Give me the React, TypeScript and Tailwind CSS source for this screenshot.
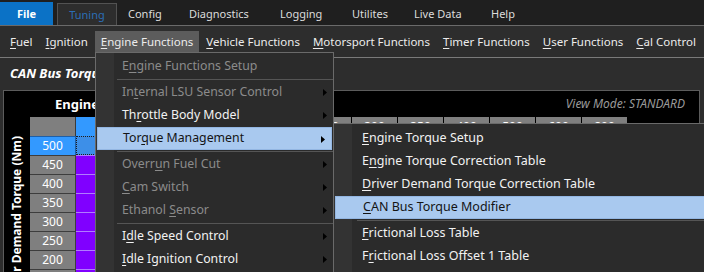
import type { ReactNode } from 'react';

const U = ({ children }: { children: ReactNode }) => <span className="underline underline-offset-2">{children}</span>;

type Item =
  | { sep: true }
  | { pre: string; u: string; post: string; disabled?: boolean; arrow?: boolean; active?: boolean };

const mainItems: Item[] = [
  { pre: 'E', u: 'n', post: 'gine Functions Setup', disabled: true },
  { sep: true },
  { pre: 'In', u: 't', post: 'ernal LSU Sensor Control', disabled: true, arrow: true },
  { pre: 'Th', u: 'r', post: 'ottle Body Model', arrow: true },
  { pre: 'Tor', u: 'q', post: 'ue Management', arrow: true, active: true },
  { sep: true },
  { pre: 'Overr', u: 'u', post: 'n Fuel Cut', disabled: true, arrow: true },
  { pre: '', u: 'C', post: 'am Switch', disabled: true, arrow: true },
  { pre: 'Ethanol ', u: 'S', post: 'ensor', disabled: true, arrow: true },
  { sep: true },
  { pre: 'I', u: 'd', post: 'le Speed Control', arrow: true },
  { pre: '', u: 'I', post: 'dle Ignition Control', arrow: true },
  { sep: true },
];

const subItems: Item[] = [
  { pre: '', u: 'E', post: 'ngine Torque Setup' },
  { pre: 'E', u: 'n', post: 'gine Torque Correction Table' },
  { pre: '', u: 'D', post: 'river Demand Torque Correction Table' },
  { pre: '', u: 'C', post: 'AN Bus Torque Modifier', active: true },
  { sep: true },
  { pre: '', u: 'F', post: 'rictional Loss Table' },
  { pre: 'F', u: 'r', post: 'ictional Loss Offset 1 Table' },
];

function MenuRows({ items, gutter }: { items: Item[]; gutter: number }) {
  return (
    <>
      {items.map((it, i) =>
        'sep' in it ? (
          <div key={i} className="h-[3px] flex items-center" style={{ paddingLeft: gutter + 3 }}>
            <div className="h-px w-full bg-[#555555]" />
          </div>
        ) : (
          <div
            key={i}
            className={
              'h-[23px] flex items-center relative whitespace-nowrap ' +
              (it.active
                ? 'bg-[#a9c9ef] border border-[#93b6e2] mx-px text-[#141414]'
                : it.disabled
                  ? 'text-[#8b8b8b]'
                  : 'text-[#f2f2f2]')
            }
          >
            <span style={{ marginLeft: it.active ? gutter + 7 : gutter + 8 }}>
              {it.pre}
              <U>{it.u}</U>
              {it.post}
            </span>
            {it.arrow && (
              <svg className="absolute right-[6px] top-[8px]" width="4" height="7" viewBox="0 0 4 7">
                <path d="M0 0 L4 3.5 L0 7 Z" fill="#000" />
              </svg>
            )}
          </div>
        )
      )}
    </>
  );
}

const cols = ['0', '50', '100', '150', '200', '250', '300', '350', '400', '500', '600', '800'];
const rows = ['500', '450', '400', '350', '300', '250', '200', '150'];

export default function App() {
  return (
    <div className="w-[704px] h-[272px] overflow-hidden relative bg-[#2d2d2d] font-['Noto_Sans',sans-serif] text-[12px] leading-none">
      {/* top tabs */}
      <div className="h-[26px] bg-[#1f1f1f] border-b border-[#6a6a6a] flex items-end text-[#dcdcdc] text-[11px] whitespace-nowrap">
        <div className="w-[53px] h-[23px] bg-[#0b72c6] text-white font-bold flex items-center justify-center">File</div>
        <div className="ml-[4px] w-[60px] h-[22px] bg-[#2d2d2d] border border-b-0 border-[#525252] text-[#2b6db6] flex items-center justify-center">
          Tuning
        </div>
        <div className="flex h-[23px] items-center pl-[11px]">
          <span className="w-[61px]">Config</span>
          <span className="w-[91px]">Diagnostics</span>
          <span className="w-[72px]">Logging</span>
          <span className="w-[62px]">Utilites</span>
          <span className="w-[77px]">Live Data</span>
          <span>Help</span>
        </div>
      </div>

      {/* ribbon */}
      <div className="h-[32px] border-b border-[#7a7a7a] flex items-center pl-[4px] gap-px text-[#ececec] text-[11.5px] whitespace-nowrap">
        {[
          ['F', 'uel'],
          ['I', 'gnition'],
          ['E', 'ngine Functions'],
          ['V', 'ehicle Functions'],
          ['M', 'otorsport Functions'],
          ['T', 'imer Functions'],
          ['U', 'ser Functions'],
          ['C', 'al Control'],
        ].map(([a, b]) => (
          <div
            key={a + b}
            className={'h-[22px] px-[6px] flex items-center ' + (a === 'E' ? 'bg-[#5c5c5c]' : '')}
          >
            <span>
              <U>{a}</U>
              {b}
            </span>
          </div>
        ))}
      </div>

      {/* content */}
      <div className="pt-[9px] px-[3px]">
        <div className="pl-[7px] h-[22px] text-[13px] font-bold italic text-white">CAN Bus Torque Modifier</div>
        <div className="mt-[1px] h-[200px] w-[697px] bg-black border border-[#5c5c5c] flex flex-col overflow-hidden">
          <div className="h-[26px] shrink-0 flex items-center justify-between pr-[14px]">
            <span className="ml-[51px] font-bold text-[13px] text-white">Engine Speed (RPM)</span>
            <span className="italic text-[#9a9a9a]">View Mode: STANDARD</span>
          </div>
          <div className="flex shrink-0">
            <div className="w-[26px] flex justify-center pt-[19px]">
              <span className="[writing-mode:vertical-rl] rotate-180 font-bold text-[12px] text-white whitespace-nowrap">
                Driver Demand Torque (Nm)
              </span>
            </div>
            <div className="flex flex-col">
              <div className="flex h-[19px]">
                <div className="w-[46px] bg-[#7f7f7f] border-r border-[#3a3a3a]" />
                {cols.map((c, i) => (
                  <div
                    key={c}
                    className={
                      'w-[46px] flex items-center justify-center text-white border-r border-black ' +
                      (i === 0 ? 'bg-[#3399ff]' : 'bg-[#7f7f7f]')
                    }
                  >
                    {c}
                  </div>
                ))}
              </div>
              {rows.map((r, ri) => (
                <div key={r} className="flex h-[19px]">
                  <div
                    className={
                      'w-[46px] flex items-center justify-center text-white border-r border-t ' +
                      (ri === 0 ? 'bg-[#3399ff] border-[#1d5fa8]' : 'bg-[#7f7f7f] border-[#3d3d3d]')
                    }
                  >
                    {r}
                  </div>
                  {cols.map((c, ci) => (
                    <div
                      key={c}
                      className={
                        'w-[46px] ' +
                        (ri === 0 && ci === 0
                          ? 'bg-[#3d8fe8] border border-dotted border-[#1c1c1c]'
                          : 'bg-[#8000ff] border-t border-r border-[#b07cff]')
                      }
                    />
                  ))}
                </div>
              ))}
            </div>
          </div>
        </div>
      </div>

      {/* main dropdown */}
      <div className="absolute left-[95px] top-[52px] w-[239px] h-[240px] bg-[#2b2b2b] border border-[#6a6a6a] pt-[2px] text-[12.3px]">
        <div className="absolute left-0 top-0 bottom-0 w-[18px] bg-[#333333]" />
        <div className="relative">
          <MenuRows items={mainItems} gutter={18} />
        </div>
      </div>

      {/* submenu */}
      <div className="absolute left-[333px] top-[123px] w-[380px] h-[160px] bg-[#2b2b2b] border border-[#6a6a6a] pt-[3px] text-[12.5px]">
        <div className="absolute left-0 top-0 bottom-0 w-[18px] bg-[#333333]" />
        <div className="relative">
          <MenuRows items={subItems} gutter={20} />
        </div>
      </div>
    </div>
  );
}
